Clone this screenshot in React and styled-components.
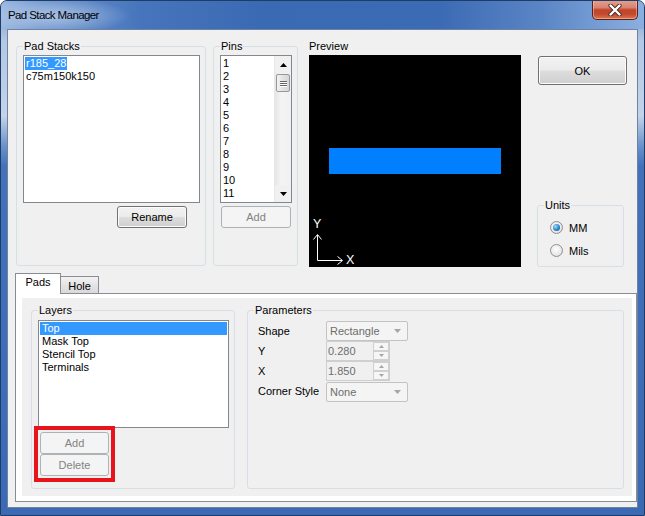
import React from 'react';
import styled, { createGlobalStyle, css } from 'styled-components';

const Global = createGlobalStyle`
  html, body { margin: 0; padding: 0; background: #ffffff; }
  body { font-family: "Liberation Sans", Arial, sans-serif; font-size: 11px; color: #000; }
  * { box-sizing: border-box; }
`;

const Window = styled.div`
  width: 645px;
  height: 516px;
  display: flex;
  flex-direction: column;
  padding: 0 6px 7px;
  border: 1px solid #1f3c66;
  border-radius: 7px 7px 0 0;
  overflow: hidden;
  background: linear-gradient(180deg, #7096cd 0px, #b3c8e5 40px, #c3d3e9 115px, #6a92cb 145px, #4172ba 165px, #3b6ab4 100%);
`;

const TitleBar = styled.div`
  height: 28px;
  margin: 0 -6px;
  padding: 0 6px 0 7px;
  display: flex;
  align-items: flex-start;
  justify-content: space-between;
  background:
    radial-gradient(ellipse 80px 18px at 50px 15px, rgba(190, 210, 238, 0.75), rgba(190, 210, 238, 0) 100%),
    linear-gradient(90deg, #9ab7e0 0px, #6f95cd 40px, #4675bd 140px, #3b6ab4 260px, #3c6bb5 440px, #5a85c5 540px, #8aaedf 640px);
`;

const TitleText = styled.span`
  font-family: "Liberation Sans", Arial, sans-serif;
  font-size: 11.5px;
  letter-spacing: -0.6px;
  line-height: 29px;
  color: #000;
`;

const CloseBtn = styled.div`
  width: 46px;
  height: 20px;
  margin-top: -1px;
  border: 1px solid #5b2117;
  border-top: none;
  border-radius: 0 0 5px 5px;
  display: flex;
  align-items: center;
  justify-content: center;
  background: linear-gradient(180deg, #e3a493 0%, #d8826f 40%, #c3452b 52%, #c24a2e 75%, #d9794f 100%);
  box-shadow: inset 0 0 0 1px rgba(255, 220, 210, 0.45);
`;

const Client = styled.div`
  flex: 1;
  background: #f0f0f0;
  border: 1px solid #6f82a0;
  display: flex;
  flex-direction: column;
  padding: 9px 0 0 8px;
`;

const TopRow = styled.div`
  display: flex;
  align-items: flex-start;
`;

const Group = styled.fieldset`
  margin: 0;
  padding: 0;
  min-width: 0;
  border: 1px solid #d5dfe5;
  border-radius: 3px;
  width: ${p => p.$w}px;
  height: ${p => p.$h}px;
  margin-left: ${p => p.$ml || 0}px;
  margin-top: ${p => p.$mt || 0}px;
`;

const Legend = styled.legend`
  margin-left: 6px;
  padding: 0 1px;
  font-size: 11px;
  line-height: 14px;
`;

const ListBox = styled.div`
  width: ${p => p.$w}px;
  height: ${p => p.$h}px;
  margin: ${p => p.$m};
  border: 1px solid #828790;
  background: #ffffff;
  padding: ${p => (p.$scroll ? '0' : '1px')};
  overflow: hidden;
  display: flex;
`;

const Items = styled.div`
  flex: 1;
  padding: ${p => (p.$scroll ? '1px 0 0 1px' : '0')};
`;

const Item = styled.div`
  height: 13px;
  line-height: 13px;
  padding-left: ${p => p.$pad ?? 1}px;
  white-space: nowrap;
  ${p => p.$fit && css`width: fit-content; padding-right: 1px;`}
  ${p => p.$sel && css`background: #3399ff; color: #ffffff;`}
`;

const ScrollBar = styled.div`
  width: 17px;
  display: flex;
  flex-direction: column;
  background: #f0f0f0;
  border-left: 1px solid #e8e8e8;
`;

const ScrollArrow = styled.div`
  height: 17px;
  display: flex;
  align-items: center;
  justify-content: center;
`;

const Track = styled.div`
  flex: 1;
  background: linear-gradient(90deg, #e6e6e6, #f4f4f4 40%, #f0f0f0);
`;

const Thumb = styled.div`
  margin: 1px 1px 0 1px;
  height: 18px;
  border: 1px solid #979797;
  border-radius: 2px;
  background: linear-gradient(90deg, #f3f3f3, #e2e2e2 50%, #d6d6d6);
  display: flex;
  flex-direction: column;
  align-items: center;
  justify-content: center;
  gap: 1px;
`;

const Grip = styled.div`
  width: 7px;
  height: 1px;
  background: #666;
  box-shadow: 0 1px 0 #fff;
`;

const Button = styled.button`
  display: block;
  font: inherit;
  font-size: 11px;
  width: ${p => p.$w}px;
  height: ${p => p.$h || 22}px;
  margin: ${p => p.$m || '0'};
  padding: 0;
  border: 1px solid #707070;
  border-radius: 3px;
  color: #000;
  background: linear-gradient(180deg, #f2f2f2 0%, #ebebeb 48%, #dddddd 52%, #cfcfcf 100%);
  box-shadow: inset 0 0 0 1px #fcfcfc;
  ${p => p.disabled && css`
    border-color: #adb2b5;
    background: #f4f4f4;
    color: #838383;
    box-shadow: none;
  `}
`;

const PreviewCol = styled.div`
  margin-left: 11px;
  display: flex;
  flex-direction: column;
`;

const Caption = styled.div`
  line-height: 14px;
  height: 16px;
`;

const Canvas = styled.div`
  width: 212px;
  height: 212px;
  background: #000;
`;

const RightCol = styled.div`
  margin-left: 16px;
  display: flex;
  flex-direction: column;
`;

const RadioRow = styled.div`
  display: flex;
  align-items: center;
  gap: 6px;
  height: 17px;
  margin: ${p => p.$mt}px 0 0 12px;
`;

const Radio = styled.span`
  width: 13px;
  height: 13px;
  border-radius: 50%;
  border: 1px solid #8d8f91;
  background: radial-gradient(circle at 45% 40%, #ffffff 0%, #ececec 50%, #d3d3d3 100%);
  display: inline-flex;
  align-items: center;
  justify-content: center;
`;

const Dot = styled.span`
  width: 7px;
  height: 7px;
  border-radius: 50%;
  background: radial-gradient(circle at 35% 35%, #9fdcfb 0%, #2a86c8 55%, #0f4d8a 100%);
`;

const Tabs = styled.div`
  margin: 6px 0 0 -1px;
  width: 622px;
  display: flex;
  flex-direction: column;
`;

const TabStrip = styled.div`
  display: flex;
  align-items: flex-end;
  height: 20px;
  position: relative;
  z-index: 1;
`;

const Tab = styled.div`
  border: 1px solid #898c95;
  border-bottom: none;
  display: flex;
  justify-content: center;
  font-size: 11px;
  ${p => p.$active
    ? css`
      width: 46px;
      height: 21px;
      margin-bottom: -1px;
      background: #ffffff;
      line-height: 16px;
    `
    : css`
      width: 38px;
      height: 17px;
      border-left: none;
      background: linear-gradient(180deg, #f3f3f3, #e4e4e4 50%, #d9d9d9);
      line-height: 17px;
      padding-top: 1px;
    `}
`;

const TabPanel = styled.div`
  height: 209px;
  border: 1px solid #898c95;
  background: #ffffff;
  padding: 4px 4px 5px 6px;
  display: flex;
`;

const Page = styled.div`
  flex: 1;
  background: #f0f0f0;
  display: flex;
  align-items: flex-start;
`;

const BtnStack = styled.div`
  width: 69px;
  margin: 4px 0 0 8px;
  outline: 4px solid #e8141c;
  outline-offset: 2px;
`;

const ParamGrid = styled.div`
  display: grid;
  grid-template-columns: 68px auto;
  grid-auto-rows: 20px;
  align-items: center;
  justify-items: start;
  margin: 4px 0 0 10px;
`;

const FieldLabel = styled.span`
  line-height: 13px;
`;

const Combo = styled.div`
  width: 82px;
  height: 20px;
  border: 1px solid #c3c3c3;
  border-radius: 2px;
  background: #f4f4f4;
  color: #6d6d6d;
  display: flex;
  align-items: center;
  justify-content: space-between;
  padding: 0 6px 0 3px;
  margin-top: ${p => p.$mt || 0}px;
`;

const NumBox = styled.div`
  width: 64px;
  height: 20px;
  border: 1px solid #cfcfcf;
  background: #f0f0f0;
  color: #6d6d6d;
  display: flex;
  align-items: center;
  justify-content: space-between;
  padding-left: 1px;
`;

const Spin = styled.div`
  width: 16px;
  height: 18px;
  display: flex;
  flex-direction: column;
`;

const SpinBtn = styled.div`
  flex: 1;
  border: 1px solid #d0d0d0;
  background: #f6f6f6;
  display: flex;
  align-items: center;
  justify-content: center;
`;

const Tri = ({ up, color = '#000', w = 7, h = 4 }) => (
  <svg width={w} height={h} viewBox={`0 0 ${w} ${h}`}>
    <path d={up ? `M0 ${h} L${w / 2} 0 L${w} ${h} Z` : `M0 0 L${w} 0 L${w / 2} ${h} Z`} fill={color} />
  </svg>
);

const CloseIcon = () => (
  <svg width="14" height="12" viewBox="0 0 14 12">
    <path d="M2.5 1.5 L11.5 10.5 M11.5 1.5 L2.5 10.5" stroke="#4a2a25" strokeWidth="4.2" strokeLinecap="round" />
    <path d="M2.5 1.5 L11.5 10.5 M11.5 1.5 L2.5 10.5" stroke="#ffffff" strokeWidth="2.4" strokeLinecap="round" />
  </svg>
);

const PreviewDrawing = () => (
  <svg width="212" height="212" viewBox="0 0 212 212">
    <rect x="20" y="93" width="172" height="26" fill="#0080ff" />
    <g stroke="#ffffff" strokeWidth="1" fill="none">
      <path d="M8.5 180 L8.5 205.5 L33 205.5" />
      <path d="M4.5 184.5 L8.5 179.5 L12.5 184.5" />
      <path d="M28.5 201.5 L33.5 205.5 L28.5 209.5" />
    </g>
    <text x="4" y="173" fill="#ffffff" fontFamily="Liberation Sans, Arial, sans-serif" fontSize="12.5">Y</text>
    <text x="37" y="209" fill="#ffffff" fontFamily="Liberation Sans, Arial, sans-serif" fontSize="12.5">X</text>
  </svg>
);

const pins = ['1', '2', '3', '4', '5', '6', '7', '8', '9', '10', '11'];
const layers = ['Top', 'Mask Top', 'Stencil Top', 'Terminals'];

export default function App() {
  return (
    <>
      <Global />
      <Window>
        <TitleBar>
          <TitleText>Pad Stack Manager</TitleText>
          <CloseBtn><CloseIcon /></CloseBtn>
        </TitleBar>
        <Client>
          <TopRow>
            <Group $w={190} $h={227}>
              <Legend>Pad Stacks</Legend>
              <ListBox $w={177} $h={148} $m="2px 0 0 6px">
                <Items>
                  <Item $sel $fit>r185_28</Item>
                  <Item>c75m150k150</Item>
                </Items>
              </ListBox>
              <Button $w={70} $m="3px 0 0 100px">Rename</Button>
            </Group>
            <Group $w={85} $h={227} $ml={7}>
              <Legend>Pins</Legend>
              <ListBox $w={72} $h={148} $m="2px 0 0 6px" $scroll>
                <Items $scroll>
                  {pins.map(p => <Item key={p}>{p}</Item>)}
                </Items>
                <ScrollBar>
                  <ScrollArrow><Tri up /></ScrollArrow>
                  <Track>
                    <Thumb><Grip /><Grip /><Grip /></Thumb>
                  </Track>
                  <ScrollArrow><Tri /></ScrollArrow>
                </ScrollBar>
              </ListBox>
              <Button $w={70} $m="3px 0 0 7px" disabled>Add</Button>
            </Group>
            <PreviewCol>
              <Caption>Preview</Caption>
              <Canvas><PreviewDrawing /></Canvas>
            </PreviewCol>
            <RightCol>
              <Button $w={89} $h={29} $m="17px 0 0 1px">OK</Button>
              <Group $w={87} $h={69} $mt={113}>
                <Legend>Units</Legend>
                <RadioRow $mt={7}><Radio><Dot /></Radio>MM</RadioRow>
                <RadioRow $mt={6}><Radio />Mils</RadioRow>
              </Group>
            </RightCol>
          </TopRow>
          <Tabs>
            <TabStrip>
              <Tab $active>Pads</Tab>
              <Tab>Hole</Tab>
            </TabStrip>
            <TabPanel>
              <Page>
                <Group $w={204} $h={186} $ml={9} $mt={5}>
                  <Legend>Layers</Legend>
                  <ListBox $w={191} $h={108} $m="3px 0 0 6px">
                    <Items>
                      {layers.map((l, i) => <Item key={l} $sel={i === 0} $pad={2}>{l}</Item>)}
                    </Items>
                  </ListBox>
                  <BtnStack>
                    <Button $w={69} disabled>Add</Button>
                    <Button $w={69} disabled>Delete</Button>
                  </BtnStack>
                </Group>
                <Group $w={377} $h={186} $ml={12} $mt={5}>
                  <Legend>Parameters</Legend>
                  <ParamGrid>
                    <FieldLabel>Shape</FieldLabel>
                    <Combo>Rectangle<Tri color="#a6a6a6" /></Combo>
                    <FieldLabel>Y</FieldLabel>
                    <NumBox>0.280<Spin><SpinBtn><Tri up w={5} h={3} color="#a6a6a6" /></SpinBtn><SpinBtn><Tri w={5} h={3} color="#a6a6a6" /></SpinBtn></Spin></NumBox>
                    <FieldLabel>X</FieldLabel>
                    <NumBox>1.850<Spin><SpinBtn><Tri up w={5} h={3} color="#a6a6a6" /></SpinBtn><SpinBtn><Tri w={5} h={3} color="#a6a6a6" /></SpinBtn></Spin></NumBox>
                    <FieldLabel>Corner Style</FieldLabel>
                    <Combo $mt={2}>None<Tri color="#a6a6a6" /></Combo>
                  </ParamGrid>
                </Group>
              </Page>
            </TabPanel>
          </Tabs>
        </Client>
      </Window>
    </>
  );
}
